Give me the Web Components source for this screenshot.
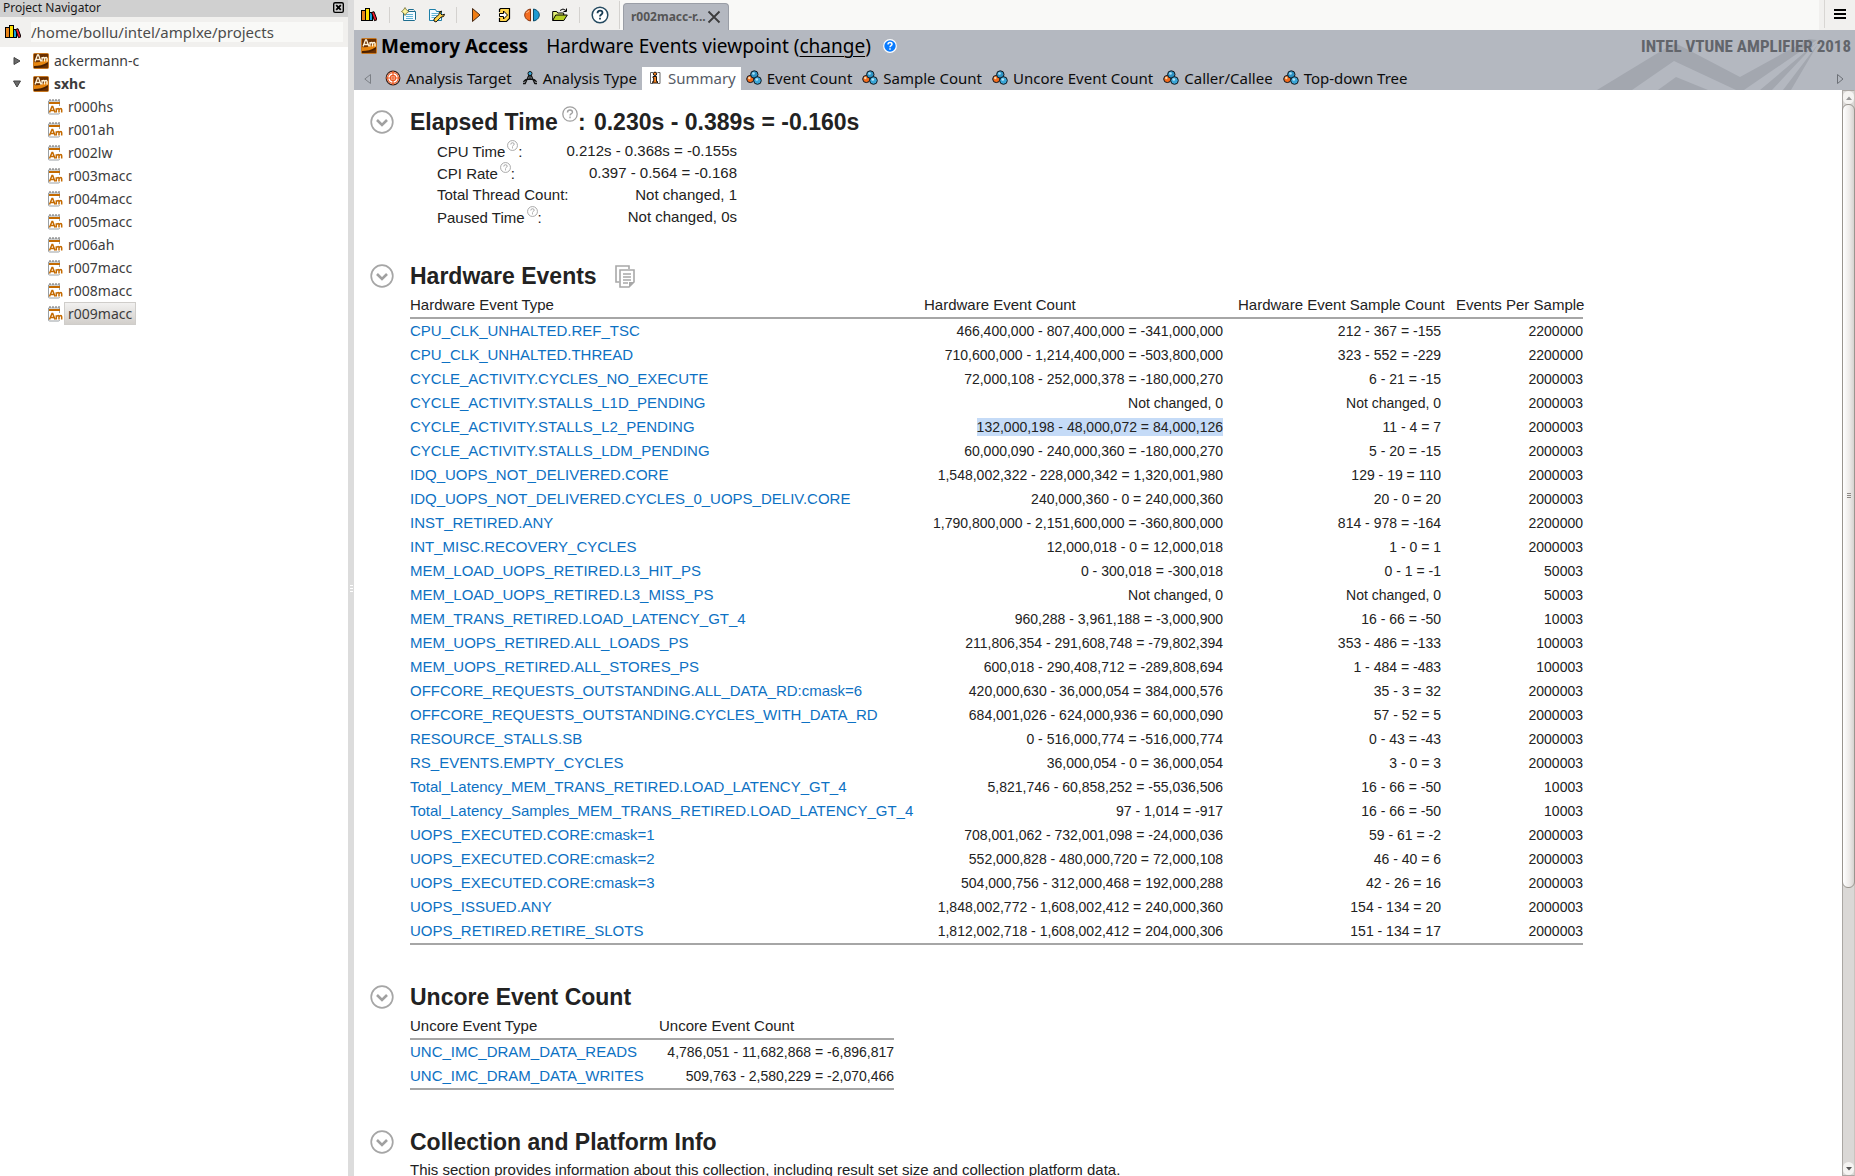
<!DOCTYPE html>
<html lang="en">
<head>
<meta charset="utf-8">
<title>Memory Access - Hardware Events viewpoint</title>
<style>
html,body{height:100%;margin:0}
body{background:#fff;overflow:hidden;font-family:"Noto Sans","Open Sans",sans-serif}
</style>
</head>
<body>
<vt-app></vt-app>
<script>
const define=(name,html,setup)=>{
  customElements.define(name,class extends HTMLElement{
    constructor(){super();this.attachShadow({mode:'open'});}
    connectedCallback(){
      if(this.ready)return;this.ready=true;
      const t=document.createElement('template');
      t.innerHTML='<style>*{box-sizing:border-box}[hidden]{display:none}</style>'+(typeof html==='function'?html(this):html);
      this.shadowRoot.append(t.content.cloneNode(true));
      if(setup)setup(this);
    }
  });
};

const ICONS={
books:[16,16,`<g stroke="#000" stroke-width="1"><rect x=".5" y="3.5" width="4" height="10" fill="#e8851c"/><rect x="4.500" y="1.500" width="4" height="12" fill="#ffe000"/><rect x="8.500" y="5.500" width="3" height="8" fill="#19a3dd"/><path d="M10.500 5.500l2.500-.8 3 8-2.500 1z" fill="#f0182c"/></g>`],
project:[16,16,`<rect x=".5" y=".5" width="15" height="15" rx="1" fill="#6b3000" stroke="#c87820"/><path d="M1 9c5 1 9-1 14-4v5c-5 3-9 4-14 4z" fill="#e8860e"/><path d="M1 13c5 0 9-1 14-4v2c-5 3-8 4-14 4z" fill="#4a2000"/><path d="M2 8.500L4.500 2h1L8 8.500M3 6.500h4M9 8.500V4M9 5.500q2-2 2.500 0v3m0-3q2-2 2.500 0v3" fill="none" stroke="#fff3d8" stroke-width="1.300"/>`],
result:[16,16,`<path d="M1.500 14V2h11v12q0 1-1 1h-9q-1 0-1-1z" fill="#fff" stroke="#9aa0a4"/><path d="M2 1h2m1 0h2m1 0h2m1 0h2" stroke="#666"/><rect x="2" y="3" width="11" height="2" fill="#c46a00"/><rect x="3" y="7" width="12" height="7" fill="#fff"/><path d="M2.500 13.500L5 7.500h.7l2.300 6M3.500 11.500h4M9.300 13.500V9.300m0 1.500q2.400-2.600 2.700 0v2.700m0-2.700q2.400-2.600 2.700 0v2.700" fill="none" stroke="#c46a00" stroke-width="1.500"/>`],
closebox:[12,12,`<rect x=".75" y=".75" width="10.500" height="10.500" rx="1.500" fill="none" stroke="#000" stroke-width="1.500"/><path d="M3.500 3.500l5 5m0-5l-5 5" stroke="#000" stroke-width="2"/>`],
newproj:[16,16,`<path d="M2.500 13.500v-9h12v8l-1 1z" fill="#f4fbff" stroke="#1d6d8f"/><path d="M7.500 4V2.500h5l1 1" fill="none" stroke="#1d6d8f"/><path d="M5 7.500h7M5 9.500h7M5 11.500h7" stroke="#62b4d6"/><path d="M4 .500L5.500 3 8 4.500 5.500 6 4 8.500 2.500 6 .5 4.500l2-1.500z" fill="#fff6a0" stroke="#5d5a1c" stroke-width=".7"/>`],
configproj:[16,16,`<path d="M.5 13.500v-11h6l1 2h5v9z" fill="#f4fbff" stroke="#1d7fa8"/><path d="M2.500 6.500h7M2.500 8.500h6M2.500 10.500h5" stroke="#62b4d6"/><path d="M5 12l5-4.500q-.5-3 2.500-3.500l-1 2.500 1.500 1.500 2.500-.8q0 3-3.500 3L7 15l-2-1z" fill="#ffd34a" stroke="#000" stroke-width=".9"/>`],
play:[16,16,`<path d="M4.500 1.500v13L12 8z" fill="#ef7d14" stroke="#4a2b14"/>`],
import:[16,16,`<path d="M3.500 5V2.500l1-1h9v10l-3 3h-7V11" fill="#ffd54a" stroke="#000" stroke-width="1.200"/><path d="M3.500 6.500h4V4l4 4-4 4V9.500h-4z" fill="#fff" stroke="#000"/>`],
compare:[16,16,`<path d="M6.500 2C2 3 .7 6 .7 8s1.300 5 5.800 6z" fill="#f36d21" stroke="#83310a"/><path d="M9.500 2C14 3 15.300 6 15.300 8s-1.300 5-5.800 6z" fill="#1c9ad2" stroke="#064a69"/><path d="M2.500 6q1-1.500 2.500-2" stroke="#ffc59d" fill="none"/>`],
folder:[16,16,`<path d="M.7 13.500v-9h4l1 1.500h6v2.500" fill="#e6f27a" stroke="#000"/><path d="M.7 13.500l3-5.500h11.600l-3.500 5.500z" fill="#b6cf25" stroke="#000"/><path d="M8 3.500q3-3 6 0m.5-2v3h-3" fill="none" stroke="#000"/>`],
help:[18,18,`<circle cx="9" cy="9" r="7.800" fill="#fff" stroke="#244a60" stroke-width="1.500"/><path d="M6.500 7.200q0-2.600 2.500-2.600t2.500 2.200c0 1.700-2.500 1.700-2.500 3.700m0 1.300v1.800" fill="none" stroke="#173b52" stroke-width="1.800"/>`],
x:[14,14,`<path d="M1.500 1.500l11 11m0-11l-11 11" stroke="#3b3b3b" stroke-width="1.800"/>`],
menu:[12,10,`<path d="M0 1h12M0 5h12M0 9h12" stroke="#000" stroke-width="2"/>`],
target:[16,16,`<circle cx="8" cy="8" r="6.800" fill="#fff" stroke="#3b2219" stroke-width="1.200"/><circle cx="8" cy="8" r="5.400" fill="none" stroke="#ec5a24" stroke-width="1.200"/><circle cx="8" cy="8" r="2.600" fill="none" stroke="#ec5a24" stroke-width="1.300"/><path d="M8 1v14M1 8h14" stroke="#ec5a24" stroke-width="1.200"/>`],
compass:[16,16,`<path d="M7 5L3 14M9 5l4 9M8 5v5M1.500 12q1.500-3 6.500-3t6.500 3M1 13.500h2m10 0h2" fill="none" stroke="#111" stroke-width="1.300"/><circle cx="8" cy="3.500" r="2" fill="#38a9da" stroke="#111"/>`],
info:[16,16,`<path d="M6 2.500H3.500v11H6M10.500 2.500H13v11h-2.500" fill="#fff" stroke="#666"/><circle cx="8" cy="3.800" r="1.700" fill="#f58220" stroke="#000" stroke-width=".9"/><path d="M6 6.500h3.500v5h1V13H5.700v-1.500h1V8H6z" fill="#f58220" stroke="#000" stroke-width=".9"/>`],
balls:[16,16,`<g stroke="#101820" stroke-width="1"><circle cx="4.300" cy="9" r="3.600" fill="#f26a1b"/><circle cx="8.300" cy="4.500" r="3.700" fill="#2d93c4"/><circle cx="11.500" cy="10.500" r="3.800" fill="#3aa5d6"/></g><circle cx="3.300" cy="8" r="1.200" fill="#ffd9a8"/><circle cx="7.500" cy="3.500" r="1.300" fill="#a8e0f6"/><circle cx="10.800" cy="9.500" r="1.300" fill="#b4e6fa"/>`],
bluehelp:[14,14,`<circle cx="7" cy="7" r="6.300" fill="#087bff" stroke="#fff" stroke-width="1.200"/><path d="M5 5.500q0-1.900 2-1.900t2 1.700c0 1.300-2 1.300-2 2.900m0 1v1.500" fill="none" stroke="#fff" stroke-width="1.500"/>`],
left:[8,10,`<path d="M6.500 .5v9L.8 5z" fill="none" stroke="#7c8086"/>`],
right:[7,10,`<path d="M.5 .5v9L6 5z" fill="none" stroke="#6c7076"/>`],
closed:[8,10,`<path d="M1 1.500v7L7 5z" fill="#6a6a6a" stroke="#444"/>`],
opened:[8,10,`<path d="M.5 2h7L4 8z" fill="#6a6a6a" stroke="#444"/>`],
chevron:[24,24,`<circle cx="12" cy="12" r="10.800" fill="#fff" stroke="#a6a6a6" stroke-width="1.700"/><path d="M7 10l5 5 5-5" fill="none" stroke="#a0a0a0" stroke-width="2.600"/>`],
hint:[16,16,`<circle cx="8" cy="8" r="7.200" fill="none" stroke="#a0a0a0" stroke-width="1.300"/><path d="M5.500 6.500q0-2.500 2.500-2.500t2.500 2.200c0 1.500-2.500 1.500-2.500 3.300m0 1v1.700" fill="none" stroke="#a0a0a0" stroke-width="1.400"/>`],
copy:[20,23,`<path d="M4.500 17H1V1h13v3" fill="none" stroke="#a8a8a8" stroke-width="1.600"/><path d="M5 5h14v12l-5 5H5z" fill="#fff" stroke="#a8a8a8" stroke-width="1.600"/><path d="M8 9h8M8 12h8M8 15h8M8 18h5" stroke="#a8a8a8" stroke-width="1.500"/><path d="M14 22v-5h5z" fill="#a8a8a8"/>`],
up:[6,4,`<path d="M0 4l3-3.500L6 4z" fill="#999"/>`],
down:[6,4,`<path d="M0 0l3 3.500L6 0z" fill="#555"/>`]
};
define('vt-icon',h=>{
  const [w,ht,body]=ICONS[h.getAttribute('name')];
  const W=+(h.getAttribute('size')||w),H=Math.round(W*ht/w);
  return `<style>:host{display:inline-flex;flex:none}svg{display:block}</style><svg width="${W}" height="${H}" viewBox="0 0 ${w} ${ht}" aria-hidden="true">${body}</svg>`;
});

define('vt-tree-item',h=>`<style>
:host{display:block}
.row{display:flex;align-items:center;height:23px;padding-left:13px}
.row.child{padding-left:47px}
.twist{width:20px;display:flex}
button{font:14px/20px "Noto Sans",sans-serif;color:#3c3c3c;background:none;border:1px solid transparent;padding:0 3px;height:23px;margin:0 0 0 1px}
.bold{font-weight:700}
.sel{background:linear-gradient(#f2f1f0,#d2cfcb);border-color:#cfcdca}
</style><div class="row ${h.hasAttribute('child')?'child':''}">${h.hasAttribute('child')?'':`<span class="twist"><vt-icon name="${h.getAttribute('state')}"></vt-icon></span>`}<vt-icon name="${h.hasAttribute('child')?'result':'project'}"></vt-icon><button type="button" class="${h.getAttribute('state')==='opened'?'bold':''} ${h.hasAttribute('selected')?'sel':''}"><slot></slot></button></div>`);

define('vt-navigator',`<style>
:host{display:flex;flex-direction:column;background:#fff;color:#3c3c3c}
header{height:17px;background:#d0d0d0;display:flex;align-items:center;justify-content:space-between;padding:0 4px 2px 3px;font-size:12px;line-height:14px;color:#1a1a1a}
header button{border:0;padding:0;background:none;display:flex}
.path{height:30px;background:#f1f0ee;display:flex;align-items:center;gap:10px;padding:0 5px}
input{flex:1;min-width:0;border:0;padding:0;height:20px;background:#f9f9f7;font:15px/20px "Noto Sans",sans-serif;color:#4c4c4c}
.tree{padding-top:2px}
</style><header><span>Project Navigator</span><button type="button" aria-label="Close"><vt-icon name="closebox" size="11"></vt-icon></button></header>
<div class="path"><vt-icon name="books"></vt-icon><input aria-label="Project directory" value="/home/bollu/intel/amplxe/projects"></div>
<div class="tree"><vt-tree-item state="closed">ackermann-c</vt-tree-item><vt-tree-item state="opened">sxhc</vt-tree-item>
${['r000hs','r001ah','r002lw','r003macc','r004macc','r005macc','r006ah','r007macc','r008macc'].map(r=>`<vt-tree-item child>${r}</vt-tree-item>`).join('')}<vt-tree-item child selected>r009macc</vt-tree-item></div>`);

define('vt-toolbar',`<style>
:host{display:flex;height:30px;background:#f9f9f7}
.tools{display:flex;align-items:center;width:266px;background:#f1f0ee}
button{border:0;background:none;padding:0;display:flex;align-items:center;justify-content:center}
.tools button{width:28px;height:28px}
.tools button.wide{width:30px}
.sep{width:1px;height:16px;background:#d4d2cf;margin:0 5px}
.sep.end{height:28px;margin:0 0 0 auto}
.tab{display:flex;align-items:center;gap:1px;height:27px;align-self:flex-end;width:106px;margin-left:3px;padding-left:7px;border:1px solid #9a9ea6;border-bottom:0;border-radius:4px 4px 0 0;background:#b4b8c0;color:#555}
.tab span{font-size:12px;font-weight:700;line-height:18px}
.menu{margin-left:auto;width:36px;border-left:5px solid #f1f0ee;background:#f1f0ee}
.menu button{width:30px;height:28px;border-left:1px solid #d8d6d3}
</style><div class="tools"><button class="wide" type="button" aria-label="Project navigator"><vt-icon name="books"></vt-icon></button><i class="sep"></i><button type="button" aria-label="New project"><vt-icon name="newproj"></vt-icon></button><button type="button" aria-label="Configure project"><vt-icon name="configproj"></vt-icon></button><i class="sep"></i><button type="button" aria-label="New analysis"><vt-icon name="play"></vt-icon></button><button type="button" aria-label="Import result"><vt-icon name="import"></vt-icon></button><button type="button" aria-label="Compare results"><vt-icon name="compare"></vt-icon></button><button type="button" aria-label="Open result"><vt-icon name="folder"></vt-icon></button><i class="sep"></i><button class="wide" type="button" aria-label="Help"><vt-icon name="help"></vt-icon></button><i class="sep end"></i></div>
<div class="tab"><span>r002macc-r...</span><button type="button" aria-label="Close tab"><vt-icon name="x"></vt-icon></button></div>
<div class="menu"><button type="button" aria-label="Menu"><vt-icon name="menu"></vt-icon></button></div>`);

define('vt-tab',h=>`<style>
:host{display:flex}
button{border:0;background:none;display:flex;align-items:center;gap:5px;height:23px;padding:0 5px 2px;font:15px/20px "Noto Sans",sans-serif;color:#0c0c0c;white-space:nowrap}
.on{background:#fff;color:#555b66}
</style><button type="button" class="${h.hasAttribute('selected')?'on':''}"><vt-icon name="${h.getAttribute('icon')}"></vt-icon><slot></slot></button>`);

define('vt-viewbar',`<style>
:host{display:flex;flex-direction:column;height:60px;background:#b4b8c0;position:relative;overflow:hidden;color:#000}
.art{position:absolute;right:0;top:0}
.title{height:37px;display:flex;align-items:center;padding:0 4px 5px 7px;position:relative;font-size:19px;line-height:28px}
h1{font-size:19px;line-height:28px;margin:0 18px 0 4px}
a{color:inherit;text-underline-offset:3px;text-decoration-thickness:1px}
.title vt-icon.q{margin-left:12px}
.brand{margin-left:auto;font:bold 17px/26px "Roboto Condensed","Open Sans Condensed",Roboto,"Liberation Sans",sans-serif;color:#62656b}
.tabs{display:flex;align-items:center;height:23px;position:relative;padding:0 11px 0 10px}
.tabs>vt-icon:first-child{margin-right:8px}
.tabs>vt-icon:last-child{margin-left:auto}
</style>
<svg class="art" width="260" height="60" viewBox="0 0 260 60" aria-hidden="true"><path d="M2 60L76 15l6-1 63 33L214 9l8 1-73 50h-8L79 31 37 60z" fill="#a3a7af"/><path d="M63 60l18-13 32 13z" fill="#a3a7af"/><path d="M165 60L222 12l-45 48zM188 60L223 14l-27 46z" fill="#a3a7af"/></svg>
<div class="title"><vt-icon name="project"></vt-icon><h1>Memory Access</h1><span>Hardware Events viewpoint (<a href="#change">change</a>)</span><vt-icon class="q" name="bluehelp"></vt-icon><span class="brand">INTEL VTUNE AMPLIFIER 2018</span></div>
<div class="tabs"><vt-icon name="left"></vt-icon><vt-tab icon="target">Analysis Target</vt-tab><vt-tab icon="compass">Analysis Type</vt-tab><vt-tab icon="info" selected>Summary</vt-tab><vt-tab icon="balls">Event Count</vt-tab><vt-tab icon="balls">Sample Count</vt-tab><vt-tab icon="balls">Uncore Event Count</vt-tab><vt-tab icon="balls">Caller/Callee</vt-tab><vt-tab icon="balls">Top-down Tree</vt-tab><vt-icon name="right"></vt-icon></div>`);

define('vt-section',`<style>
:host{display:block;margin-bottom:32px}
.head{display:flex;align-items:center;gap:16px;height:32px}
button{border:0;background:none;padding:0;display:flex}
h2{margin:0;font-size:23px;line-height:32px;font-weight:700;white-space:nowrap}
.body{padding:2px 0 0 40px}
</style><div class="head"><button type="button" aria-label="Collapse section"><vt-icon name="chevron"></vt-icon></button><h2><slot name="title"></slot></h2><slot name="action"></slot></div><div class="body"><slot></slot></div>`);

define('vt-hint',`<style>:host{display:inline-flex;vertical-align:super}button{border:0;padding:0;background:none;display:flex}</style><button type="button" aria-label="Explain"></button>`,h=>{
  const i=document.createElement('vt-icon');i.setAttribute('name','hint');i.setAttribute('size',h.getAttribute('size'));h.shadowRoot.querySelector('button').append(i);
});

const FACTS=[['CPU Time',1,'0.212s - 0.368s = -0.155s'],['CPI Rate',1,'0.397 - 0.564 = -0.168'],['Total Thread Count',0,'Not changed, 1'],['Paused Time',1,'Not changed, 0s']];
define('vt-facts',`<style>
:host{display:block}
dl{margin:0 0 0 27px;width:300px;font-size:15px;line-height:22px}
div{display:flex;justify-content:space-between;height:22px}
dd{margin:0}
vt-hint{margin:0 0 0 2px;line-height:0}
</style><dl>${FACTS.map(f=>`<div><dt>${f[0]}${f[1]?'<vt-hint size="11"></vt-hint>':''}:</dt><dd>${f[2]}</dd></div>`).join('')}</dl>`);

const EVENTS=`CPU_CLK_UNHALTED.REF_TSC|466,400,000 - 807,400,000 = -341,000,000|212 - 367 = -155|2200000
CPU_CLK_UNHALTED.THREAD|710,600,000 - 1,214,400,000 = -503,800,000|323 - 552 = -229|2200000
CYCLE_ACTIVITY.CYCLES_NO_EXECUTE|72,000,108 - 252,000,378 = -180,000,270|6 - 21 = -15|2000003
CYCLE_ACTIVITY.STALLS_L1D_PENDING|Not changed, 0|Not changed, 0|2000003
CYCLE_ACTIVITY.STALLS_L2_PENDING|*132,000,198 - 48,000,072 = 84,000,126|11 - 4 = 7|2000003
CYCLE_ACTIVITY.STALLS_LDM_PENDING|60,000,090 - 240,000,360 = -180,000,270|5 - 20 = -15|2000003
IDQ_UOPS_NOT_DELIVERED.CORE|1,548,002,322 - 228,000,342 = 1,320,001,980|129 - 19 = 110|2000003
IDQ_UOPS_NOT_DELIVERED.CYCLES_0_UOPS_DELIV.CORE|240,000,360 - 0 = 240,000,360|20 - 0 = 20|2000003
INST_RETIRED.ANY|1,790,800,000 - 2,151,600,000 = -360,800,000|814 - 978 = -164|2200000
INT_MISC.RECOVERY_CYCLES|12,000,018 - 0 = 12,000,018|1 - 0 = 1|2000003
MEM_LOAD_UOPS_RETIRED.L3_HIT_PS|0 - 300,018 = -300,018|0 - 1 = -1|50003
MEM_LOAD_UOPS_RETIRED.L3_MISS_PS|Not changed, 0|Not changed, 0|50003
MEM_TRANS_RETIRED.LOAD_LATENCY_GT_4|960,288 - 3,961,188 = -3,000,900|16 - 66 = -50|10003
MEM_UOPS_RETIRED.ALL_LOADS_PS|211,806,354 - 291,608,748 = -79,802,394|353 - 486 = -133|100003
MEM_UOPS_RETIRED.ALL_STORES_PS|600,018 - 290,408,712 = -289,808,694|1 - 484 = -483|100003
OFFCORE_REQUESTS_OUTSTANDING.ALL_DATA_RD:cmask=6|420,000,630 - 36,000,054 = 384,000,576|35 - 3 = 32|2000003
OFFCORE_REQUESTS_OUTSTANDING.CYCLES_WITH_DATA_RD|684,001,026 - 624,000,936 = 60,000,090|57 - 52 = 5|2000003
RESOURCE_STALLS.SB|0 - 516,000,774 = -516,000,774|0 - 43 = -43|2000003
RS_EVENTS.EMPTY_CYCLES|36,000,054 - 0 = 36,000,054|3 - 0 = 3|2000003
Total_Latency_MEM_TRANS_RETIRED.LOAD_LATENCY_GT_4|5,821,746 - 60,858,252 = -55,036,506|16 - 66 = -50|10003
Total_Latency_Samples_MEM_TRANS_RETIRED.LOAD_LATENCY_GT_4|97 - 1,014 = -917|16 - 66 = -50|10003
UOPS_EXECUTED.CORE:cmask=1|708,001,062 - 732,001,098 = -24,000,036|59 - 61 = -2|2000003
UOPS_EXECUTED.CORE:cmask=2|552,000,828 - 480,000,720 = 72,000,108|46 - 40 = 6|2000003
UOPS_EXECUTED.CORE:cmask=3|504,000,756 - 312,000,468 = 192,000,288|42 - 26 = 16|2000003
UOPS_ISSUED.ANY|1,848,002,772 - 1,608,002,412 = 240,000,360|154 - 134 = 20|2000003
UOPS_RETIRED.RETIRE_SLOTS|1,812,002,718 - 1,608,002,412 = 204,000,306|151 - 134 = 17|2000003`;
const TABLES={
  hw:{cols:[514,314,218,127],head:['Hardware Event Type','Hardware Event Count','Hardware Event Sample Count','Events Per Sample'],rows:EVENTS.split('\n').map(r=>r.split('|'))},
  uncore:{cols:[249,235],head:['Uncore Event Type','Uncore Event Count'],rows:[['UNC_IMC_DRAM_DATA_READS','4,786,051 - 11,682,868 = -6,896,817'],['UNC_IMC_DRAM_DATA_WRITES','509,763 - 2,580,229 = -2,070,466']]}
};
define('vt-table',h=>{
  const t=TABLES[h.getAttribute('data')];
  return `<style>
:host{display:block;margin-bottom:36px}
table{border-collapse:separate;border-spacing:0;table-layout:fixed;width:${t.cols.reduce((a,b)=>a+b)}px;font-size:15px;border-bottom:2px solid #a6a6a6}
th{font-weight:400;text-align:left;vertical-align:top;height:25px;line-height:22px;padding:0;border-bottom:2px solid #a6a6a6;white-space:nowrap}
td{height:24px;line-height:18px;font-size:14px;padding:0 15px 0 0;text-align:right;white-space:nowrap}
td:first-child{text-align:left;font-size:15px}
td:last-child{padding-right:0}
a{color:#0d71c3;text-decoration:none}
mark{background:#c5dbf7;color:inherit;display:inline-block}
</style><table><colgroup>${t.cols.map(c=>`<col style="width:${c}px">`).join('')}</colgroup><thead><tr>${t.head.map(c=>`<th scope="col">${c}</th>`).join('')}</tr></thead><tbody>${t.rows.map(r=>`<tr>${r.map((c,i)=>`<td>${i===0?`<a href="#${c}">${c}</a>`:c[0]==='*'?`<mark>${c.slice(1)}</mark>`:c}</td>`).join('')}</tr>`).join('')}</tbody></table>`;
});

define('vt-summary',`<style>
:host{display:block;overflow:hidden;background:#fff;color:#222;font-family:"Liberation Sans",Arial,sans-serif;padding:16px 0 0 16px}
p{margin:0;font-size:15px;line-height:20px}
.val{margin-left:2px}
.top{margin:0 0 0 4px}
.copy{border:0;padding:0 0 0 2px;background:none;display:flex}
</style>
<vt-section><span slot="title">Elapsed Time<vt-hint class="top" size="16"></vt-hint>: <span class="val">0.230s - 0.389s = -0.160s</span></span><vt-facts></vt-facts></vt-section>
<vt-section><span slot="title">Hardware Events</span><button class="copy" slot="action" type="button" aria-label="Copy table"><vt-icon name="copy"></vt-icon></button><vt-table data="hw"></vt-table></vt-section>
<vt-section><span slot="title">Uncore Event Count</span><vt-table data="uncore"></vt-table></vt-section>
<vt-section><span slot="title">Collection and Platform Info</span><p>This section provides information about this collection, including result set size and collection platform data.</p></vt-section>`);

define('vt-scrollbar',`<style>
:host{display:flex;flex-direction:column;background:#dad8d6;border:1px solid #aaa7a3;border-right-color:#c8c4bf}
.end{height:13px;display:flex;align-items:center;justify-content:center;background:#f5f4f2;border-radius:6px;flex:none}
.thumb{flex:784;border:1px solid #99958f;border-radius:6px;margin:0 -1px;background:linear-gradient(90deg,#fff,#eceae8 60%,#d6d3d0);display:flex;flex-direction:column;align-items:center;justify-content:center;gap:1px}
.thumb i{width:4px;height:1px;background:#8e8a86}
.track{flex:275}
</style><div class="end"><vt-icon name="up"></vt-icon></div><div class="thumb"><i></i><i></i><i></i></div><div class="track"></div><div class="end"><vt-icon name="down"></vt-icon></div>`);

define('vt-splitter',`<style>:host{display:flex;flex-direction:column;align-items:center;justify-content:center;gap:2px;background:#dcdcdc}i{width:3px;height:1px;background:#fff}</style><i></i><i></i><i></i>`);

define('vt-app',`<style>
:host{display:flex;height:100vh}
vt-navigator{flex:0 0 348px}
vt-splitter{flex:0 0 6px}
main{flex:1;min-width:0;display:flex;flex-direction:column}
.view{flex:1;min-height:0;display:flex}
vt-summary{flex:1;min-width:0}
vt-scrollbar{flex:0 0 13px}
</style><vt-navigator></vt-navigator><vt-splitter></vt-splitter><main><vt-toolbar></vt-toolbar><vt-viewbar></vt-viewbar><div class="view"><vt-summary></vt-summary><vt-scrollbar></vt-scrollbar></div></main>`);
</script>
</body>
</html>
